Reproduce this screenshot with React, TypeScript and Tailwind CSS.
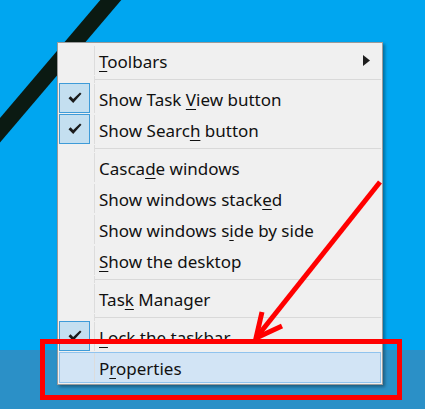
import React from "react";

type Item =
  | { type: "sep" }
  | { type: "item"; label: React.ReactNode; checked?: boolean; submenu?: boolean; hot?: boolean };

const U = ({ c }: { c: string }) => (
  <span className="underline decoration-1 underline-offset-[3px]">{c}</span>
);

const items: Item[] = [
  { type: "item", label: <><U c="T" />oolbars</>, submenu: true },
  { type: "sep" },
  { type: "item", label: <>Show Task <U c="V" />iew button</>, checked: true },
  { type: "item", label: <>Show Searc<U c="h" /> button</>, checked: true },
  { type: "sep" },
  { type: "item", label: <>Casca<U c="d" />e windows</> },
  { type: "item", label: <>Show windows stack<U c="e" />d</> },
  { type: "item", label: <>Show windows s<U c="i" />de by side</> },
  { type: "item", label: <><U c="S" />how the desktop</> },
  { type: "sep" },
  { type: "item", label: <>Tas<U c="k" /> Manager</> },
  { type: "sep" },
  { type: "item", label: <><U c="L" />ock the taskbar</>, checked: true },
  { type: "item", label: <>P<U c="r" />operties</>, hot: true },
];

function Check() {
  return (
    <svg width="14" height="12" viewBox="0 0 14 12">
      <path d="M0.5 6.2 L2.6 4.3 L5.2 7.0 L12 0.5 L13.5 1.8 L5.2 11 Z" fill="#1b1b1b" />
    </svg>
  );
}

function MenuRow({ it }: { it: Extract<Item, { type: "item" }> }) {
  return (
    <div
      className={
        "flex h-[31px] " +
        (it.hot ? "border border-[#90c3ee] bg-[#d2e4f5]" : "border border-transparent")
      }
    >
      <div className="w-[36px] shrink-0 border-r border-[#dcdcdc] -ml-px">
        {it.checked && (
          <div className="w-[31px] h-[30px] -mt-px border border-[#3e9bd8] bg-[#c4dff0] flex items-center justify-center">
            <Check />
          </div>
        )}
      </div>
      <div className="flex-1 flex items-center pl-[4px] pt-[2px] text-[17px] text-[#111] leading-none">
        <span>{it.label}</span>
        {it.submenu && (
          <svg width="7" height="11" viewBox="0 0 7 11" className="ml-auto mr-[10px] -mt-[2px]">
            <path d="M0 0 L7 5.5 L0 11 Z" fill="#1e1e1e" />
          </svg>
        )}
      </div>
    </div>
  );
}

function Sep() {
  return (
    <div className="flex h-[7px]">
      <div className="w-[36px] shrink-0 border-r border-[#dcdcdc]" />
      <div className="flex-1 flex items-center">
        <div className="h-px w-full bg-[#d9d9d9]" />
      </div>
    </div>
  );
}

export default function App() {
  return (
    <div
      className="relative w-[425px] h-[409px] overflow-hidden flex flex-col"
      style={{ fontFamily: '"Noto Sans", "Open Sans", sans-serif' }}
    >
      <div className="flex-1 bg-[#00a6f0] relative">
        <svg width="425" height="350" className="absolute inset-0">
          <line x1="121" y1="-12" x2="-10" y2="142" stroke="#0b1a12" strokeWidth="16" />
        </svg>
      </div>
      <div className="h-[59px] bg-[#2b90c7]" />

      <div className="absolute left-[57px] top-[42px] w-[326px] border border-[#9a9a9a] bg-[#f0f0f0] pt-[2px] pb-px px-px shadow-[2px_2px_3px_rgba(0,0,0,0.35)]">
        {items.map((it, i) =>
          it.type === "sep" ? <Sep key={i} /> : <MenuRow key={i} it={it} />
        )}
      </div>

      <svg width="425" height="409" className="absolute inset-0 pointer-events-none">
        <line x1="380" y1="182" x2="256" y2="338" stroke="#ff0000" strokeWidth="5" />
        <polyline points="262,312 256,338 282,326" fill="none" stroke="#ff0000" strokeWidth="5" />
        <rect x="42.5" y="341.5" width="357" height="56" fill="none" stroke="#ff0000" strokeWidth="5" />
      </svg>
    </div>
  );
}
